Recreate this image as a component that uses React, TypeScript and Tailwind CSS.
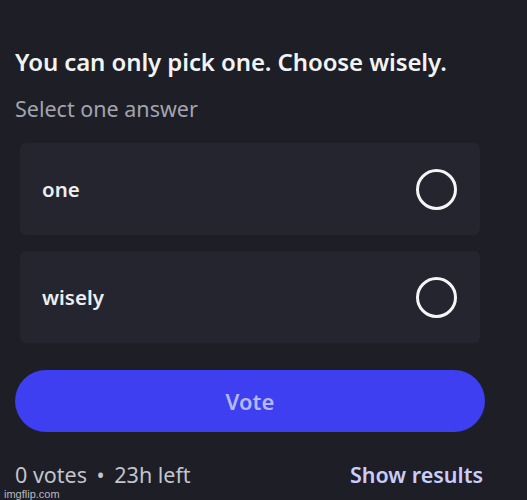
export default function App() {
  const options = ['one', 'wisely'];

  return (
    <div
      className="w-[527px] h-[500px] bg-[#1d1e26] relative overflow-hidden"
      style={{ fontFamily: '"Noto Sans", "Open Sans", sans-serif' }}
    >
      <div className="pt-[46px] pl-[15px] pr-[42px]">
        {/* Question */}
        <h1 className="text-[24px] leading-[32px] font-semibold text-[#f2f3f5] tracking-[-0.1px]">
          You can only pick one. Choose wisely.
        </h1>
        <p className="mt-[17px] text-[21.5px] leading-[28px] text-[#a3a4ad]">Select one answer</p>

        {/* Answers */}
        <div className="mt-[20px] ml-[5px] mr-[5px] flex flex-col gap-[16px]">
          {options.map(o => (
            <div
              key={o}
              className="h-[92px] rounded-[6px] bg-[#24252e] flex items-center justify-between pl-[22px] pr-[23px]"
            >
              <span className="text-[20.5px] font-semibold text-[#eceef1]">{o}</span>
              <span className="w-[41px] h-[41px] rounded-full border-[3px] border-[#f5f5f7]" />
            </div>
          ))}
        </div>

        {/* Vote */}
        <button className="mt-[27px] w-[470px] h-[62px] rounded-full bg-[#3d3ff0] text-[22px] font-semibold text-[#b4b8f6]">
          Vote
        </button>

        {/* Footer */}
        <div className="mt-[32px] w-[468px] flex items-center justify-between leading-[21px]">
          <span className="text-[21.5px] text-[#c3c4cc]">
            0 votes <span className="mx-[4px]">•</span> 23h left
          </span>
          <span className="text-[21.5px] font-semibold text-[#c9cdfb]">Show results</span>
        </div>
      </div>

      <span
        className="absolute left-[4px] bottom-0 text-[11px] leading-[11px] text-[#b9bac0]"
        style={{ fontFamily: '"Liberation Sans", sans-serif' }}
      >
        imgflip.com
      </span>
    </div>
  );
}
